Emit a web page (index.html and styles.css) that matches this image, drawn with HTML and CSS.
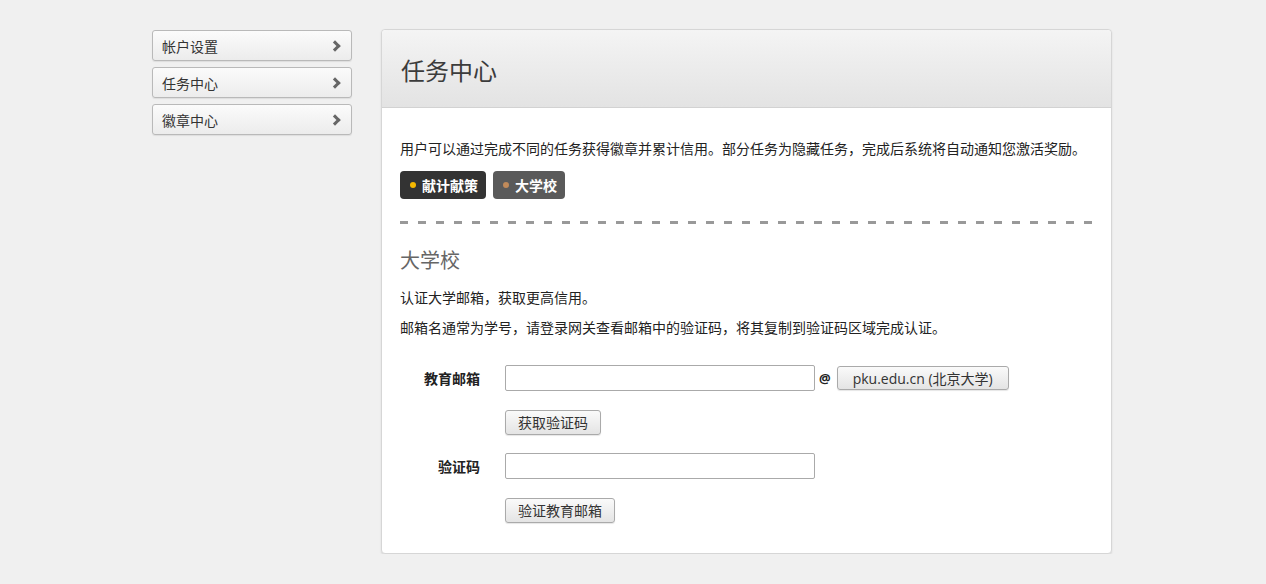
FILE: index.html
```html
<!DOCTYPE html>
<html lang="zh-CN">
<head>
  <meta charset="UTF-8">
  <title>任务中心</title>
  <link rel="stylesheet" href="styles.css">
</head>

<body>
<div class="container">
  <div class="sidebar">
    <a class="nav-item" href="#">帐户设置<span class="chev"></span></a>
    <a class="nav-item" href="#">任务中心<span class="chev"></span></a>
    <a class="nav-item" href="#">徽章中心<span class="chev"></span></a>
  </div>

  <div class="panel">
    <div class="panel-head">
      <h2>任务中心</h2>
    </div>
    <div class="panel-body">
      <p class="intro">用户可以通过完成不同的任务获得徽章并累计信用。部分任务为隐藏任务，完成后系统将自动通知您激活奖励。</p>
      <div class="tags">
        <span class="tag tag-dark"><i class="dot dot-yellow"></i>献计献策</span>
        <span class="tag tag-grey"><i class="dot dot-brown"></i>大学校</span>
      </div>
      <div class="divider"></div>

      <h3>大学校</h3>
      <p class="line">认证大学邮箱，获取更高信用。</p>
      <p class="line">邮箱名通常为学号，请登录网关查看邮箱中的验证码，将其复制到验证码区域完成认证。</p>

      <div class="form">
        <div class="row">
          <label>教育邮箱</label>
          <input type="text" class="field">
          <span class="at">@</span>
          <button class="btn btn-domain">pku.edu.cn (北京大学)</button>
        </div>
        <div class="row">
          <label></label>
          <button class="btn">获取验证码</button>
        </div>
        <div class="row">
          <label>验证码</label>
          <input type="text" class="field">
        </div>
        <div class="row">
          <label></label>
          <button class="btn">验证教育邮箱</button>
        </div>
      </div>
    </div>
  </div>
</div>
</body>
</html>
```

FILE: styles.css
```css
* {
  margin: 0;
  padding: 0;
  box-sizing: border-box;
  font-family: "Noto Sans CJK SC", "Liberation Sans", sans-serif;
}

body {
  background: #f0f0f0;
  color: #222;
}

.container {
  display: flex;
  align-items: flex-start;
  padding: 29px 0 0 152px;
}

.sidebar {
  width: 200px;
  display: flex;
  flex-direction: column;
  gap: 6px;
  margin-top: 1px;
}

.nav-item {
  position: relative;
  display: flex;
  align-items: center;
  height: 31px;
  padding-left: 9px;
  font-size: 14px;
  color: #333;
  text-decoration: none;
  background: linear-gradient(#fbfbfb, #ececec);
  border: 1px solid #b9b9b9;
  border-radius: 3px;
  box-shadow: 0 1px 1px rgba(0, 0, 0, 0.08);
}

.chev {
  position: absolute;
  right: 12px;
  top: 11px;
  width: 8px;
  height: 8px;
  border-top: 3px solid #666;
  border-right: 3px solid #666;
  transform: rotate(45deg);
}

.panel {
  width: 731px;
  margin-left: 29px;
  background: #fff;
  border: 1px solid #d6d6d6;
  border-radius: 4px;
  box-shadow: 0 1px 2px rgba(0, 0, 0, 0.1);
}

.panel-head {
  height: 78px;
  display: flex;
  align-items: center;
  padding-left: 19px;
  background: linear-gradient(#f4f4f4, #e3e3e3);
  border-bottom: 1px solid #d2d2d2;
  border-radius: 4px 4px 0 0;
}

.panel-head h2 {
  font-size: 24px;
  font-weight: normal;
  color: #3c3c3c;
  margin-top: 2px;
}

.panel-body {
  padding: 29px 18px 30px 18px;
  font-size: 14px;
}

.intro {
  line-height: 22px;
}

.tags {
  display: flex;
  gap: 7px;
  margin-top: 12px;
}

.tag {
  display: flex;
  align-items: center;
  height: 28px;
  padding: 0 8px 0 10px;
  border-radius: 4px;
  color: #fff;
  font-weight: bold;
  font-size: 14px;
}

.tag-dark {
  background: #333;
}

.tag-grey {
  background: #5a5a5a;
}

.dot {
  width: 6px;
  height: 6px;
  border-radius: 50%;
  margin-right: 6px;
}

.dot-yellow {
  background: #f5b800;
}

.dot-brown {
  background: #c08a5a;
}

.divider {
  height: 3px;
  margin-top: 22px;
  background: repeating-linear-gradient(90deg, #999 0, #999 8px, transparent 8px, transparent 18px);
}

h3 {
  margin-top: 22px;
  padding-bottom: 3px;
  font-size: 20px;
  font-weight: normal;
  color: #666;
  line-height: 28px;
}

.line {
  margin-top: 10px;
  line-height: 20px;
}

.form {
  margin-top: 28px;
  display: flex;
  flex-direction: column;
  gap: 18px;
}

.row {
  display: flex;
  align-items: center;
  min-height: 26px;
}

.row label {
  width: 80px;
  margin-right: 24px;
  text-align: right;
  font-weight: bold;
  font-size: 14px;
}

.field {
  width: 310px;
  height: 26px;
  margin-left: 1px;
  border: 1px solid #aaa;
  border-radius: 2px;
  background: #fff;
}

.at {
  margin: 0 5px 0 4px;
  font-size: 13px;
  font-weight: bold;
  font-family: "Open Sans", "Liberation Sans", sans-serif;
}

.btn {
  height: 25px;
  margin-left: 1px;
  padding: 0 12px;
  font-size: 14px;
  color: #333;
  background: linear-gradient(#fafafa, #e4e4e4);
  border: 1px solid #aaa;
  border-radius: 3px;
  box-shadow: 0 1px 1px rgba(0, 0, 0, 0.1);
}

.btn-domain {
  width: 172px;
  height: 24px;
  font-family: "Open Sans", "Noto Sans CJK SC", sans-serif;
}
```
